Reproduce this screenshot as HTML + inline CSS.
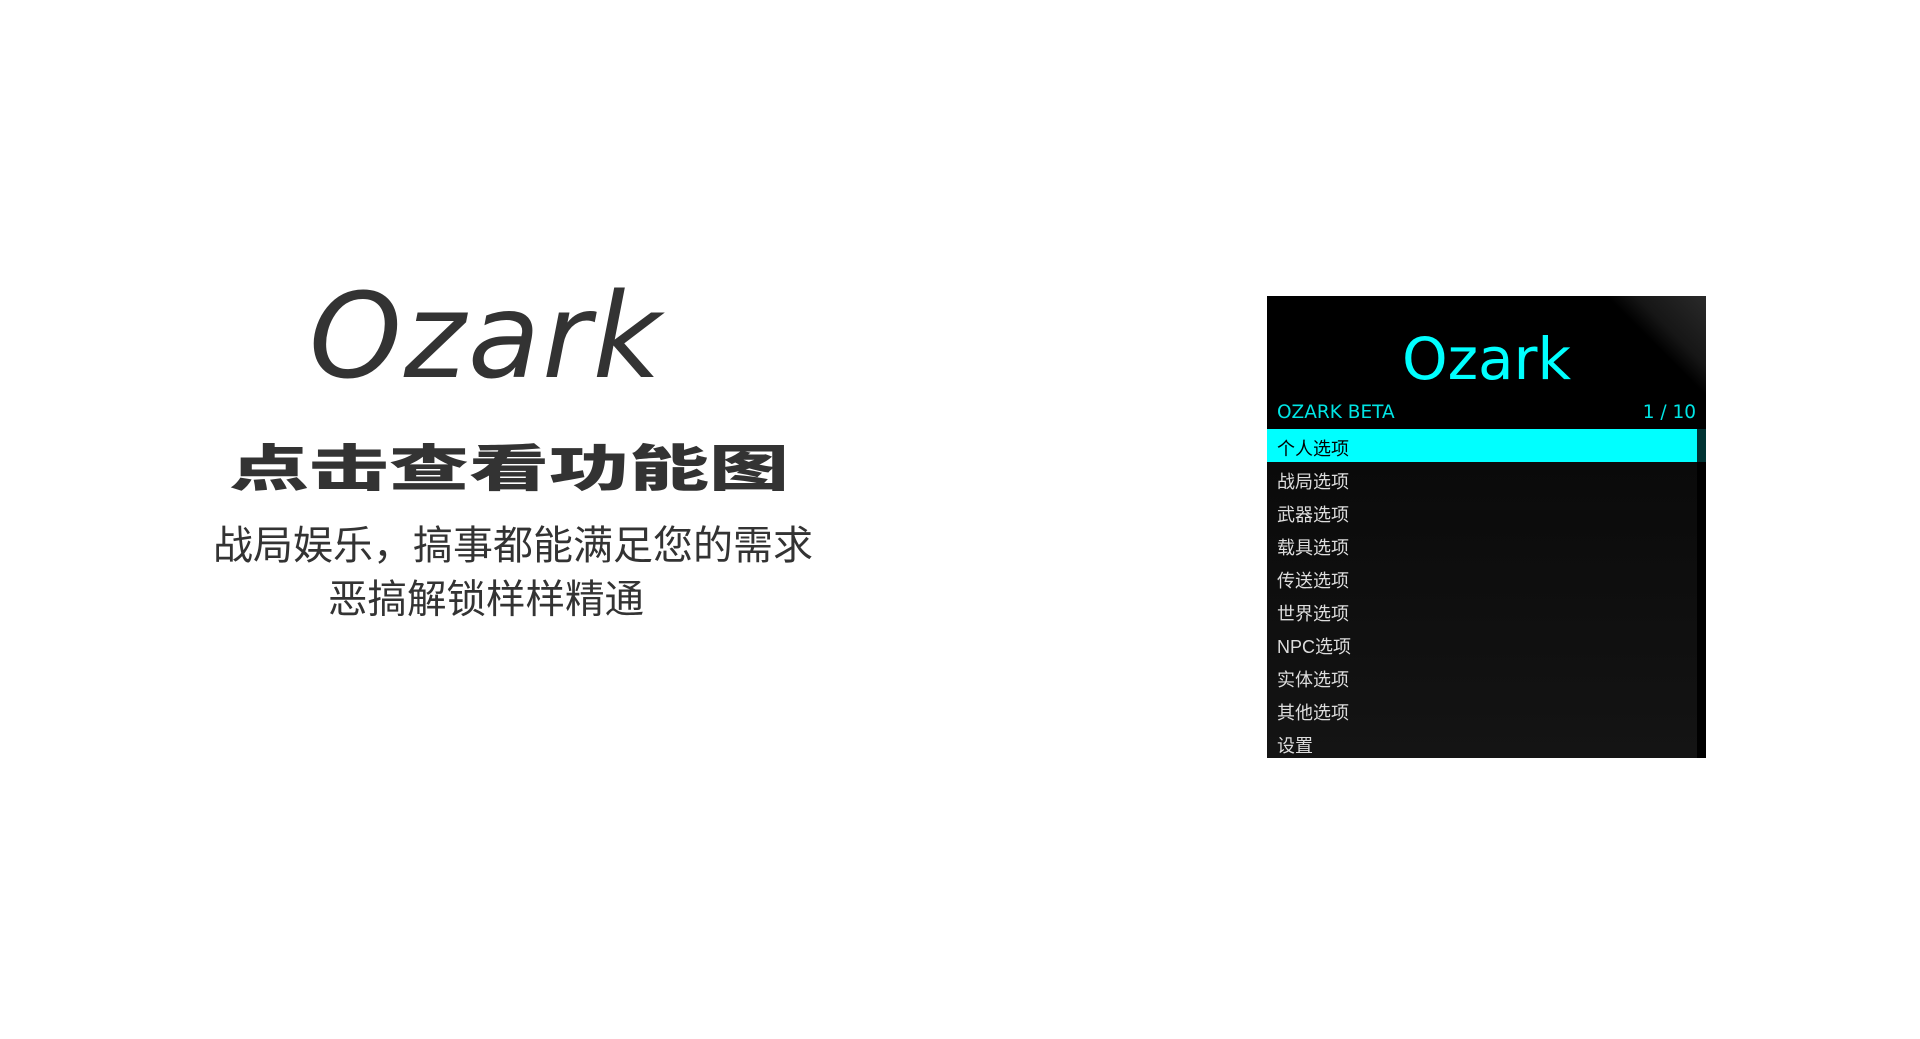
<!DOCTYPE html>
<html><head><meta charset="utf-8"><style>
html,body{margin:0;padding:0;background:#fff;width:1920px;height:1039px;overflow:hidden;position:relative}
.a{position:absolute;white-space:nowrap}
.cjk{font-family:"Liberation Sans","Noto Sans CJK SC",sans-serif}
#panel{position:absolute;left:1267px;top:296px;width:439px;height:462px;background:#000;overflow:hidden}
.row{position:absolute;left:0;width:430px;height:33px;font-size:18px;line-height:33px;color:#ddd;padding-left:10px;padding-top:4px;box-sizing:border-box}
</style></head><body>
<div class="a" style="left:309px;top:256px;font-family:'DejaVu Sans',sans-serif;font-style:italic;font-weight:300;font-size:118px;line-height:160px;color:#333;letter-spacing:2px">Ozark</div>
<div class="a cjk" style="left:229px;top:425px;font-size:64px;line-height:80px;font-weight:900;color:#333;transform:scale(1.25,0.78);transform-origin:left 58px">点击查看功能图</div>
<div class="a cjk" style="left:213px;top:520px;font-size:40px;line-height:52px;color:#333">战局娱乐，搞事都能满足您的需求</div>
<div class="a cjk" style="left:328px;top:574px;font-size:39.5px;line-height:52px;color:#333">恶搞解锁样样精通</div>
<div id="panel">
  <div style="position:absolute;left:0;top:133px;width:439px;height:329px;background:linear-gradient(#090909,#141414)"></div>
  <div style="position:absolute;left:430px;top:166px;width:9px;height:296px;background:#000"></div>
  <div style="position:absolute;right:0;top:0;width:100px;height:100px;background:linear-gradient(to bottom left,#2a2a2a 0%,#161616 35%,rgba(0,0,0,0) 50%)"></div>
  <div class="a" style="left:0;width:439px;text-align:center;top:28px;font-family:'DejaVu Sans',sans-serif;font-size:58px;line-height:70px;color:#00ffff">Ozark</div>
  <div class="a" style="left:10px;top:105px;font-family:'DejaVu Sans',sans-serif;font-size:18.5px;line-height:24px;color:#00e5e5">OZARK BETA</div>
  <div class="a" style="right:10px;top:105px;font-family:'DejaVu Sans',sans-serif;font-size:18.5px;line-height:24px;color:#00e5e5">1 / 10</div>
  <div class="row cjk" style="top:133px;background:#00ffff;color:#000">个人选项</div>
  <div style="position:absolute;left:430px;top:133px;width:9px;height:33px;background:#033"></div>
  <div class="row cjk" style="top:166px">战局选项</div>
  <div class="row cjk" style="top:199px">武器选项</div>
  <div class="row cjk" style="top:232px">载具选项</div>
  <div class="row cjk" style="top:265px">传送选项</div>
  <div class="row cjk" style="top:298px">世界选项</div>
  <div class="row cjk" style="top:331px">NPC选项</div>
  <div class="row cjk" style="top:364px">实体选项</div>
  <div class="row cjk" style="top:397px">其他选项</div>
  <div class="row cjk" style="top:430px">设置</div>
</div>
</body></html>
